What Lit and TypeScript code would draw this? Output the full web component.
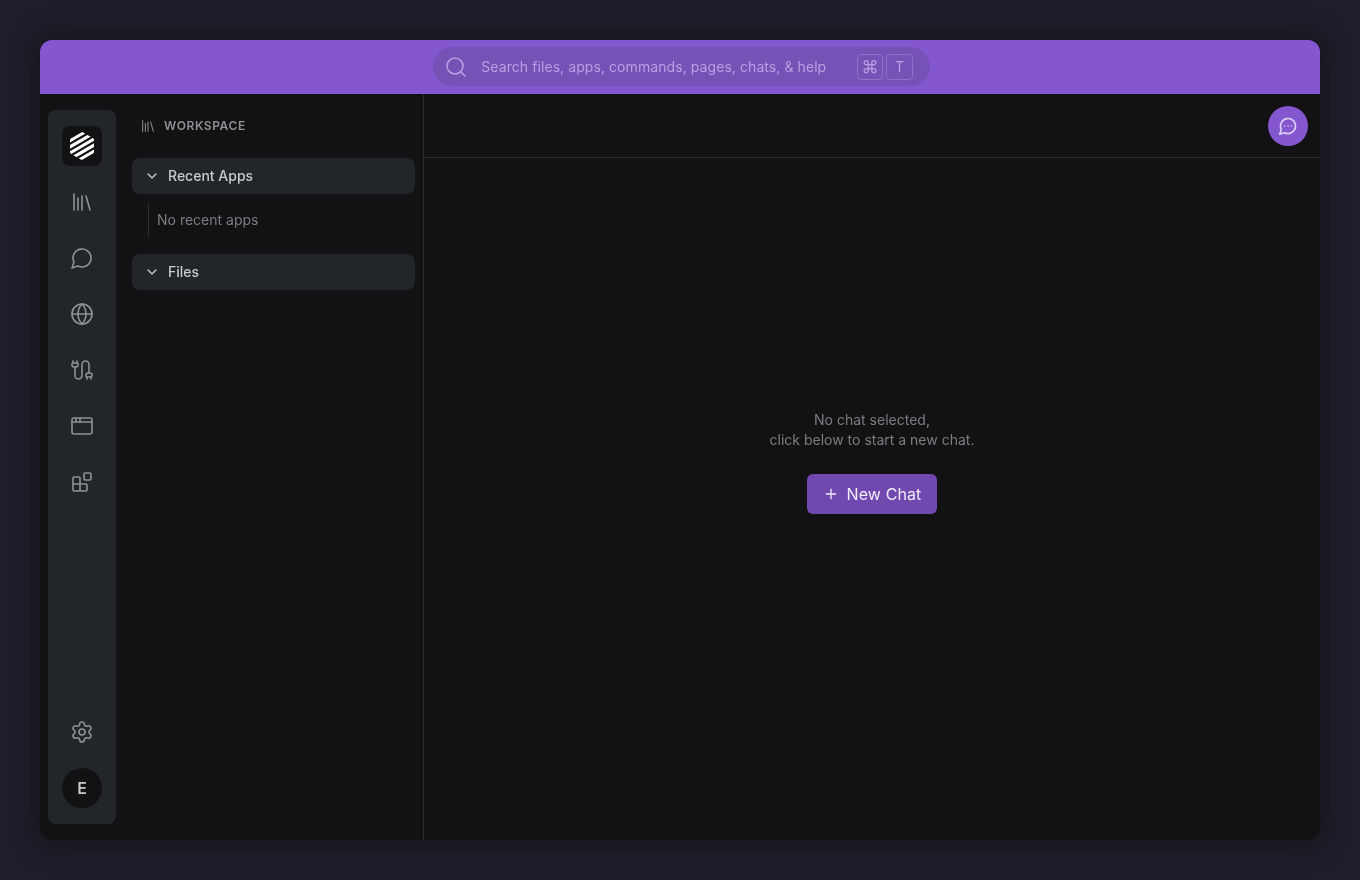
import { LitElement, html, css, svg } from "lit";
import { customElement } from "lit/decorators.js";

const icon = (size: string, body: unknown) => html`<svg class="ico ${size}" viewBox="0 0 24 24" fill="none" stroke="currentColor" stroke-linecap="round" stroke-linejoin="round">${body}</svg>`;

const library = svg`<path d="m16 6 4 14"/><path d="M12 6v14"/><path d="M8 8v12"/><path d="M4 4v16"/>`;
const message = svg`<path d="M7.9 20A9 9 0 1 0 4 16.1L2 22Z"/>`;
const messageMore = svg`<path d="M7.9 20A9 9 0 1 0 4 16.1L2 22Z"/><path d="M8 12h.01"/><path d="M12 12h.01"/><path d="M16 12h.01"/>`;
const globe = svg`<circle cx="12" cy="12" r="10"/><path d="M12 2a14.5 14.5 0 0 0 0 20 14.5 14.5 0 0 0 0-20"/><path d="M2 12h20"/>`;
const cable = svg`<path d="M17 21v-2a1 1 0 0 1-1-1v-1a2 2 0 0 1 2-2h2a2 2 0 0 1 2 2v1a1 1 0 0 1-1 1"/><path d="M19 15V6.5a1 1 0 0 0-7 0v11a1 1 0 0 1-7 0V9"/><path d="M21 21v-2h-4"/><path d="M3 5h4V3"/><path d="M7 5a1 1 0 0 1 1 1v1a2 2 0 0 1-2 2H4a2 2 0 0 1-2-2V6a1 1 0 0 1 1-1V3"/>`;
const appWindow = svg`<rect x="2" y="4" width="20" height="16" rx="2"/><path d="M10 4v4"/><path d="M2 8h20"/><path d="M6 4v4"/>`;
const blocks = svg`<rect x="14" y="3" width="7" height="7" rx="1"/><path d="M10 21V8a1 1 0 0 0-1-1H4a1 1 0 0 0-1 1v12a1 1 0 0 0 1 1h12a1 1 0 0 0 1-1v-5a1 1 0 0 0-1-1H3"/>`;
const settings = svg`<path d="M9.671 4.136a2.34 2.34 0 0 1 4.659 0 2.34 2.34 0 0 0 3.319 1.915 2.34 2.34 0 0 1 2.33 4.033 2.34 2.34 0 0 0 0 3.831 2.34 2.34 0 0 1-2.33 4.033 2.34 2.34 0 0 0-3.319 1.915 2.34 2.34 0 0 1-4.659 0 2.34 2.34 0 0 0-3.32-1.915 2.34 2.34 0 0 1-2.33-4.033 2.34 2.34 0 0 0 0-3.831A2.34 2.34 0 0 1 6.35 6.051a2.34 2.34 0 0 0 3.319-1.915"/><circle cx="12" cy="12" r="3"/>`;
const search = svg`<circle cx="11" cy="11" r="8"/><path d="m21 21-4.3-4.3"/>`;
const chevron = svg`<path d="m6 9 6 6 6-6"/>`;
const plus = svg`<path d="M5 12h14"/><path d="M12 5v14"/>`;

@customElement("app-root")
export class AppRoot extends LitElement {
  static styles = css`
    :host { display: block; width: 1360px; height: 880px; background: #1e1f2b; font-family: Inter, "Liberation Sans", sans-serif; padding: 40px; box-sizing: border-box; }
    * { box-sizing: border-box; }
    .ico { display: block; flex: none; stroke-width: 2; }
    .s24 { width: 24px; height: 24px; stroke-width: 1.6; }
    .s16 { width: 16px; height: 16px; }
    .s20 { width: 20px; height: 20px; }
    .window { width: 1280px; height: 800px; border-radius: 12px; background: #121214; overflow: hidden; display: flex; flex-direction: column; box-shadow: 0 0 24px 6px rgba(12, 13, 16, 0.55); will-change: transform; }
    .top { height: 54px; flex: none; background: #8457cf; display: flex; align-items: center; justify-content: center; padding-left: 3px; padding-bottom: 1px; }
    .search { width: 497px; height: 39px; border-radius: 20px; background: #7651b6; display: flex; align-items: center; padding: 0 17px 0 11px; color: #b9a0e3; }
    .search-text { margin-left: 13.3px; font-size: 14px; letter-spacing: 0.075px; flex: 1; white-space: nowrap; }
    .kbd { width: 27px; height: 26px; border: 1px solid #8f72c6; border-radius: 4px; display: flex; align-items: center; justify-content: center; font-size: 14px; margin-left: 3px; }
    .kbd.cmd { width: 26px; font-size: 17px; }
    .body { flex: 1; display: flex; min-height: 0; }
    .rail-wrap { flex: none; padding: 16px 0 16px 8px; display: flex; }
    .rail { width: 68px; background: #22252a; border-radius: 8px; padding: 16px 14px; display: flex; flex-direction: column; align-items: center; gap: 16px; color: #8f9194; }
    .logo { width: 40px; height: 40px; border-radius: 8px; background: #121214; display: flex; align-items: center; justify-content: center; }
    .rail-btn { width: 40px; height: 40px; display: flex; align-items: center; justify-content: center; }
    .spacer { flex: 1; }
    .avatar { width: 40px; height: 40px; border-radius: 50%; background: #121214; color: #c9cacb; display: flex; align-items: center; justify-content: center; font-size: 16px; font-weight: 600; }
    .side { width: 308px; flex: none; border-right: 1px solid #2a2c30; padding: 0 8px 0 16px; display: flex; flex-direction: column; }
    .side-head { height: 64px; display: flex; align-items: center; gap: 8px; padding: 0 0 1px 8px; color: #8f9194; font-size: 12px; font-weight: 600; letter-spacing: 0.05em; }
    .side-head .ico { stroke-width: 1.5; }
    .row { height: 36px; border-radius: 8px; background: #22252a; display: flex; align-items: center; gap: 8px; padding: 0 0 1px 12px; color: #c9cacb; font-size: 14px; font-weight: 500; }
    .row .ico { margin-top: 1px; }
    .empty { margin: 8px 0 16px 16px; height: 36px; border-left: 1px solid #2a2c30; padding: 0 0 1px 8px; display: flex; align-items: center; font-size: 14px; color: #7b7d80; }
    .main { flex: 1; display: flex; flex-direction: column; min-width: 0; }
    .main-top { height: 64px; flex: none; border-bottom: 1px solid #2a2c30; display: flex; align-items: center; justify-content: flex-end; padding: 0 12px 0 0; }
    .fab { width: 40px; height: 40px; border-radius: 50%; background: #8457cf; color: #dccdf3; display: flex; align-items: center; justify-content: center; }
    .center { flex: 1; display: flex; flex-direction: column; align-items: center; justify-content: center; padding-bottom: 74px; }
    .msg { font-size: 14px; line-height: 20px; color: #7b7d80; text-align: center; }
    .new { margin-top: 24px; height: 40px; width: 130px; border-radius: 6px; background: #7148b0; color: #f0ecf7; display: flex; align-items: center; justify-content: center; gap: 8px; font-size: 16px; font-weight: 400; letter-spacing: 0.1px; }
  `;

  render() {
    return html`
      <div class="window">
        <div class="top">
          <div class="search">
            ${icon("s24", search)}
            <span class="search-text">Search files, apps, commands, pages, chats, &amp; help</span>
            <span class="kbd cmd">⌘</span><span class="kbd">T</span>
          </div>
        </div>
        <div class="body">
          <div class="rail-wrap">
            <nav class="rail">
              <div class="logo">
                <svg width="24" height="28" viewBox="0 0 24 28">
                  <defs><clipPath id="hex"><path d="M10.8.4a2.400 2.400 0 0 1 2.400 0l9.600 5.600a2.400 2.400 0 0 1 1.200 2v12a2.400 2.400 0 0 1-1.200 2l-9.600 5.600a2.400 2.400 0 0 1-2.400 0l-9.600-5.600a2.400 2.400 0 0 1-1.200-2V8a2.400 2.400 0 0 1 1.200-2Z"/></clipPath></defs>
                  <g clip-path="url(#hex)" stroke="#fff" stroke-width="3.100">
                    <path d="M-4 11.080 28-7.580"/><path d="M-4 17.230 28-1.430"/><path d="M-4 23.330 28 4.670"/><path d="M-4 29.430 28 10.770"/><path d="M-4 35.580 28 16.920"/>
                  </g>
                </svg>
              </div>
              ${[library, message, globe, cable, appWindow, blocks].map((b) => html`<div class="rail-btn">${icon("s24", b)}</div>`)}
              <div class="spacer"></div>
              <div class="rail-btn">${icon("s24", settings)}</div>
              <div class="avatar">E</div>
            </nav>
          </div>
          <aside class="side">
            <div class="side-head">${icon("s16", library)}<span>WORKSPACE</span></div>
            <div class="row">${icon("s16", chevron)}<span>Recent Apps</span></div>
            <div class="empty">No recent apps</div>
            <div class="row">${icon("s16", chevron)}<span>Files</span></div>
          </aside>
          <main class="main">
            <div class="main-top"><div class="fab">${icon("s20", messageMore)}</div></div>
            <div class="center">
              <div class="msg">No chat selected,<br />click below to start a new chat.</div>
              <div class="new">${icon("s16", plus)}<span>New Chat</span></div>
            </div>
          </main>
        </div>
      </div>
    `;
  }
}
